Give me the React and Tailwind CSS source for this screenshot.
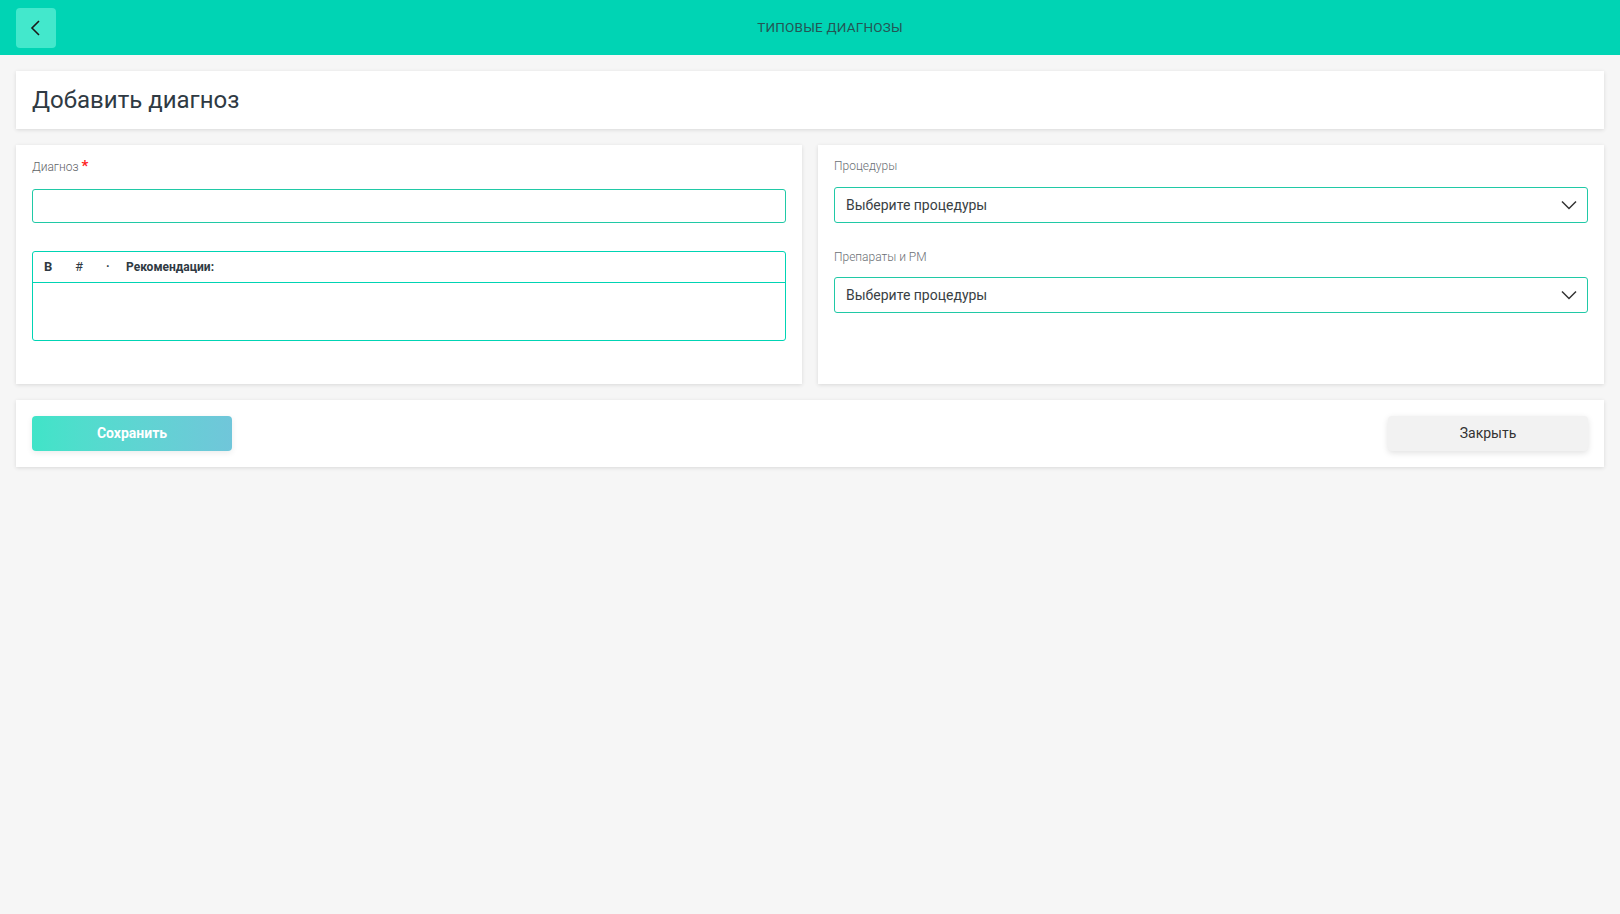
import React from 'react'

const Chevron = () => (
  <svg width="18" height="18" viewBox="0 0 18 18" fill="none" stroke="#333" strokeWidth="1.5">
    <path d="M2 5.5 L9 12.5 L16 5.5" />
  </svg>
)

const Select = ({ text }) => (
  <div className="h-9 flex items-center justify-between border border-[#20c9a6] rounded-[3px] pl-[11px] pr-[9px]">
    <span className="text-[14px] text-[#3a3f44]">{text}</span>
    <Chevron />
  </div>
)

const App = () => {
  return (
    <div className="min-h-[914px] bg-[#f6f6f6] font-['Roboto',sans-serif]">
      <div className="h-[55px] bg-[#00d4b4] flex items-center px-4">
        <button className="w-10 h-10 rounded-[4px] bg-[#43e8cc] flex items-center justify-center">
          <svg width="20" height="20" viewBox="0 0 20 20" fill="none" stroke="#1a1a1a" strokeWidth="1.6">
            <path d="M13 3 L6 10 L13 17" />
          </svg>
        </button>
        <div className="flex-1 text-center text-[13.5px] text-[#245654] tracking-[0.2px]">ТИПОВЫЕ ДИАГНОЗЫ</div>
      </div>

      <div className="px-4 pt-4">
        <div className="bg-white h-[58px] flex items-center px-4 shadow-[0_1px_4px_rgba(0,0,0,0.12)]">
          <h1 className="text-[24px] text-[#2f3a43] leading-none">Добавить диагноз</h1>
        </div>

        <div className="grid grid-cols-2 gap-4 mt-4">
          <div className="bg-white h-[239px] px-4 pt-[15px] shadow-[0_1px_4px_rgba(0,0,0,0.12)]">
            <div className="text-[12px] font-light text-[#5f6468] leading-[14px] flex items-start">
              Диагноз<span className="text-[#ff1f1f] text-[15px] font-bold leading-[12px] ml-[3px]">*</span>
            </div>
            <div className="mt-[15px] h-[34px] border border-[#20c9a6] rounded-[3px]"></div>
            <div className="mt-[28px] border border-[#00d4b4] rounded-[3px]">
              <div className="h-[31px] flex items-center border-b border-[#00d4b4] text-[12px] text-[#2f3a43] font-bold">
                <span className="ml-[11px] w-[30px] text-[13px]">B</span>
                <span className="w-[32px] font-normal text-[13px] pl-[1px]">#</span>
                <span className="w-[20px] text-[12px]">·</span>
                <span>Рекомендации:</span>
              </div>
              <div className="h-[57px]"></div>
            </div>
          </div>

          <div className="bg-white h-[239px] px-4 pt-[14px] shadow-[0_1px_4px_rgba(0,0,0,0.12)]">
            <div className="text-[12px] font-light text-[#6b7075] leading-[14px]">Процедуры</div>
            <div className="mt-[14px]">
              <Select text="Выберите процедуры" />
            </div>
            <div className="text-[12px] font-light text-[#6b7075] leading-[14px] mt-[27px]">Препараты и РМ</div>
            <div className="mt-[13px]">
              <Select text="Выберите процедуры" />
            </div>
          </div>
        </div>

        <div className="bg-white mt-4 h-[67px] px-4 flex items-center justify-between shadow-[0_1px_4px_rgba(0,0,0,0.12)]">
          <button className="w-[200px] h-[35px] rounded-[4px] bg-gradient-to-r from-[#40e4c8] to-[#70c6da] text-white text-[14px] font-bold shadow-[0_2px_6px_rgba(0,0,0,0.08)]">
            Сохранить
          </button>
          <button className="w-[200px] h-[35px] rounded-[4px] bg-[#f2f2f2] text-[#333] text-[14px] shadow-[0_2px_6px_rgba(0,0,0,0.12)]">
            Закрыть
          </button>
        </div>
      </div>
    </div>
  )
}

export default App
